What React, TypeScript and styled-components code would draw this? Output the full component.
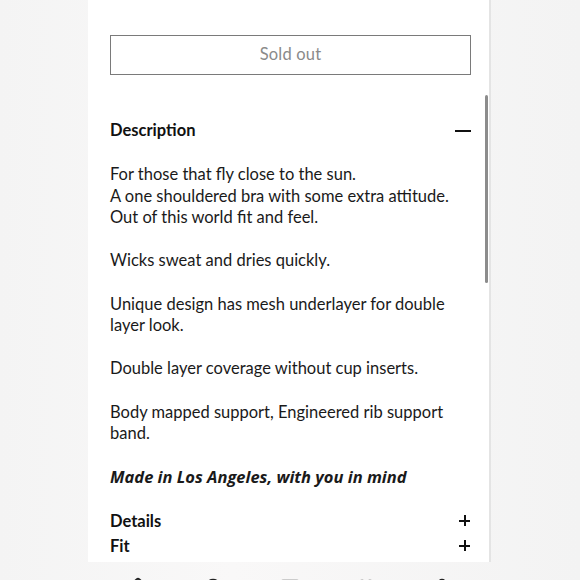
import styled, { createGlobalStyle } from "styled-components";
import { Home, Search, Square, Heart, User } from "lucide-react";

const GlobalStyle = createGlobalStyle`
  html, body {
    margin: 0;
    padding: 0;
    height: 100%;
    overflow: hidden;
  }
  body {
    background: linear-gradient(90deg, #f4f4f4 0%, #f9f8f8 40%, #f3f3f3 100%);
    font-family: Lato, "Open Sans", sans-serif;
    color: #1c1c1c;
  }
`;

const Page = styled.div`
  width: 580px;
  height: 580px;
  display: flex;
  flex-direction: column;
`;

const Panel = styled.div`
  position: relative;
  margin-left: 88px;
  width: 403px;
  height: 562px;
  flex-shrink: 0;
  background: #fff;
  border-right: 2px solid #e4e4e4;
  box-sizing: border-box;
  padding: 35px 20px 0 22px;
  display: flex;
  flex-direction: column;
`;

const SoldOut = styled.button`
  width: 361px;
  height: 40px;
  padding: 0 0 3px;
  background: #fff;
  border: 1.5px solid #7a7a7a;
  color: #8a8a8a;
  font-family: Lato, sans-serif;
  font-size: 16.5px;
  letter-spacing: 0.2px;
  cursor: default;
`;

const Section = styled.div<{ $gap: number }>`
  margin-top: ${(p) => p.$gap}px;
  width: 361px;
`;

const SectionHead = styled.div`
  display: flex;
  justify-content: space-between;
  align-items: center;
  height: 22px;
  font-size: 16.5px;
  font-weight: 700;
  color: #111;
`;

const Minus = styled.span`
  width: 16px;
  height: 2px;
  background: #111;
  margin-top: 1px;
`;

const Plus = styled.span`
  position: relative;
  width: 11px;
  height: 11px;
  margin-right: 1px;
  &::before,
  &::after {
    content: "";
    position: absolute;
    background: #111;
  }
  &::before {
    left: 0;
    top: 4.5px;
    width: 11px;
    height: 2px;
  }
  &::after {
    left: 4.5px;
    top: 0;
    width: 2px;
    height: 11px;
  }
`;

const Body = styled.div`
  margin-top: 23px;
  font-size: 16.5px;
  line-height: 21.6px;
  color: #1a1a1a;
`;

const Para = styled.p`
  margin: 0 0 21.6px;
  white-space: nowrap;
`;

const Tagline = styled.p`
  margin: 0;
  font-family: "Open Sans", Lato, sans-serif;
  font-size: 16.5px;
  font-weight: 700;
  font-style: italic;
  white-space: nowrap;
`;

const Scrollbar = styled.div`
  position: absolute;
  left: 397px;
  top: 95px;
  width: 3px;
  height: 188px;
  border-radius: 2px;
  background: #8c8c8c;
`;

const BottomBar = styled.div`
  margin-top: 15px;
  display: flex;
  justify-content: space-around;
  padding: 0 100px 0 100px;
  color: #222;
`;

const Item = styled.div`
  display: flex;
  justify-content: center;
  width: 24px;
`;

const headers = [
  { title: "Details", gap: 22 },
  { title: "Fit", gap: 3 },
];

export default function App() {
  return (
    <Page>
      <GlobalStyle />
      <Panel>
        <SoldOut>Sold out</SoldOut>
        <Section $gap={44}>
          <SectionHead>
            Description
            <Minus />
          </SectionHead>
          <Body>
            <Para>
              For those that fly close to the sun.
              <br />A one shouldered bra with some extra attitude.
              <br />
              Out of this world fit and feel.
            </Para>
            <Para>Wicks sweat and dries quickly.</Para>
            <Para>
              Unique design has mesh underlayer for double
              <br />
              layer look.
            </Para>
            <Para>Double layer coverage without cup inserts.</Para>
            <Para>
              Body mapped support, Engineered rib support
              <br />
              band.
            </Para>
            <Tagline>Made in Los Angeles, with you in mind</Tagline>
          </Body>
        </Section>
        {headers.map((h) => (
          <Section key={h.title} $gap={h.gap}>
            <SectionHead>
              {h.title}
              <Plus />
            </SectionHead>
          </Section>
        ))}
        <Scrollbar />
      </Panel>
      <BottomBar>
        <Item><Home size={22} strokeWidth={2} /></Item>
        <Item><Search size={22} strokeWidth={2} /></Item>
        <Item><Square size={22} strokeWidth={1.5} color="#ccc" /></Item>
        <Item><Heart size={22} strokeWidth={2} /></Item>
        <Item><User size={22} strokeWidth={2} /></Item>
      </BottomBar>
    </Page>
  );
}
